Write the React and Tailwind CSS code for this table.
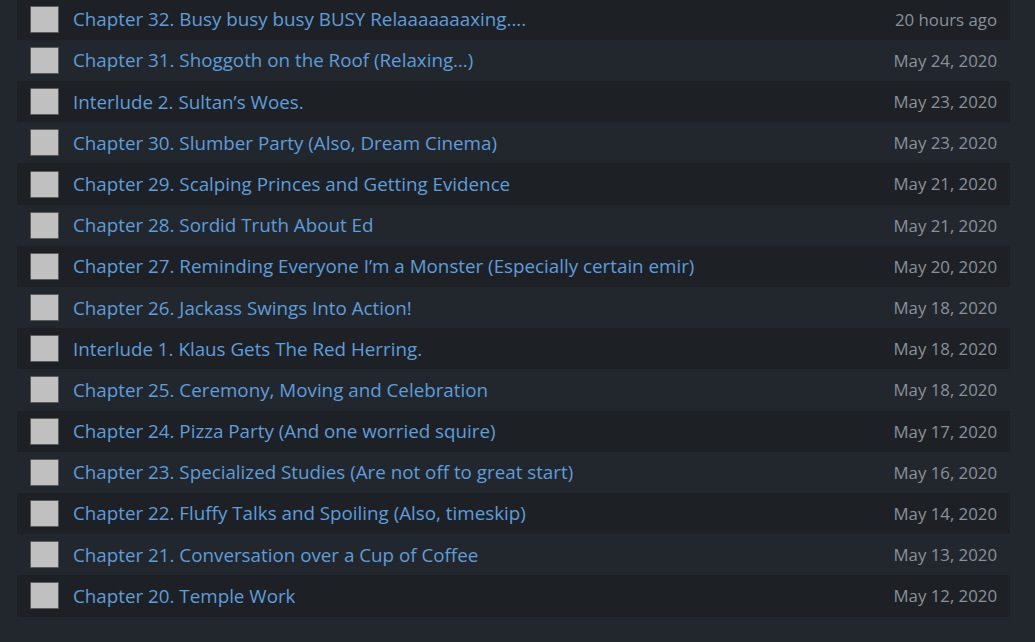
const chapters = [
  ["Chapter 32. Busy busy busy BUSY Relaaaaaaaxing....", "20 hours ago"],
  ["Chapter 31. Shoggoth on the Roof (Relaxing…)", "May 24, 2020"],
  ["Interlude 2. Sultan’s Woes.", "May 23, 2020"],
  ["Chapter 30. Slumber Party (Also, Dream Cinema)", "May 23, 2020"],
  ["Chapter 29. Scalping Princes and Getting Evidence", "May 21, 2020"],
  ["Chapter 28. Sordid Truth About Ed", "May 21, 2020"],
  ["Chapter 27. Reminding Everyone I’m a Monster (Especially certain emir)", "May 20, 2020"],
  ["Chapter 26. Jackass Swings Into Action!", "May 18, 2020"],
  ["Interlude 1. Klaus Gets The Red Herring.", "May 18, 2020"],
  ["Chapter 25. Ceremony, Moving and Celebration", "May 18, 2020"],
  ["Chapter 24. Pizza Party (And one worried squire)", "May 17, 2020"],
  ["Chapter 23. Specialized Studies (Are not off to great start)", "May 16, 2020"],
  ["Chapter 22. Fluffy Talks and Spoiling (Also, timeskip)", "May 14, 2020"],
  ["Chapter 21. Conversation over a Cup of Coffee", "May 13, 2020"],
  ["Chapter 20. Temple Work", "May 12, 2020"],
];

const ChapterRow = ({ title, date, odd }) => (
  <div
    className={`h-[41.2px] flex items-center pl-[13px] pr-[13px] ${
      odd ? "bg-[#1d2126]" : ""
    }`}
  >
    <div className="w-[29px] h-[27px] shrink-0 bg-[#c0c0c0] border border-[#5b5b5b] rounded-[1px]" />
    <a className="ml-[14px] text-[18.8px] text-[#5d9edb] truncate cursor-pointer">
      {title}
    </a>
    <span className="ml-auto pl-4 text-[16.8px] text-[#8a9199] whitespace-nowrap">
      {date}
    </span>
  </div>
);

export default function App() {
  return (
    <div
      className="w-[1035px] h-[642px] overflow-hidden bg-[#22272e] pl-[17px] pr-[25px]"
      style={{ fontFamily: '"Open Sans", "Liberation Sans", sans-serif' }}
    >
      <div className="-mt-[1.3px] flex flex-col">
        {chapters.map(([title, date], i) => (
          <ChapterRow key={title} title={title} date={date} odd={i % 2 === 0} />
        ))}
      </div>
    </div>
  );
}
